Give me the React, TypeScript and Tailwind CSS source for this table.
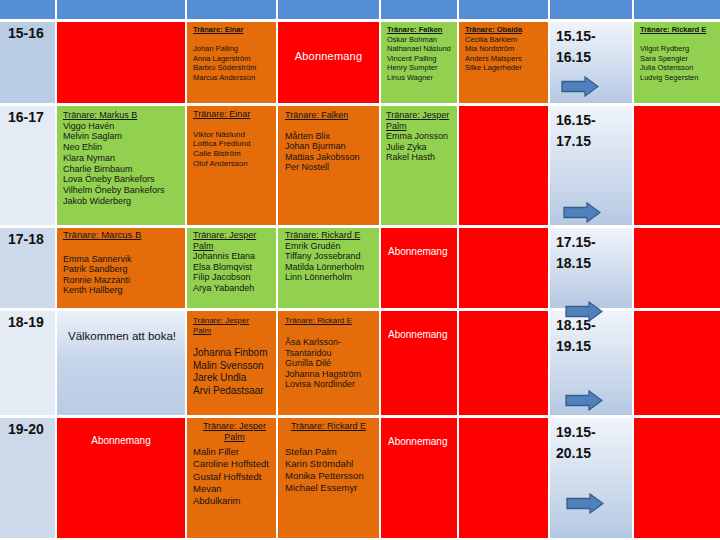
import type { ReactNode } from 'react';

const RED = 'bg-[#ff0000]';
const ORANGE = 'bg-[#e46c0a]';
const GREEN = 'bg-[#92d050]';
const HEAD = 'bg-[#558ed5]';

function Arrow({ className }: { className: string }) {
  return (
    <svg
      className={`absolute z-10 ${className}`}
      width="38"
      height="21"
      viewBox="0 0 38 21"
    >
      <polygon
        points="1,5.5 24,5.5 24,1 37,10.5 24,20 24,15.5 1,15.5"
        fill="#4f81bd"
        stroke="#385d8a"
        strokeWidth="1.3"
      />
    </svg>
  );
}

function Coach({ children, className = '' }: { children: ReactNode; className?: string }) {
  return <div className={`underline ${className}`}>{children}</div>;
}

function Names({ names }: { names: string[] }) {
  return (
    <>
      {names.map((n) => (
        <div key={n} className="whitespace-nowrap">
          {n}
        </div>
      ))}
    </>
  );
}

function TimeLabel({ label, bg }: { label: string; bg: string }) {
  return (
    <div className={`${bg} pl-[8px] pt-[2px] text-[14px] font-bold leading-[18px] text-[#111]`}>
      {label}
    </div>
  );
}

function Slot({ from, to, arrow }: { from: string; to: string; arrow: string }) {
  return (
    <div className="relative bg-linear-to-b from-[#f0f4fa] via-[#d3dfee] to-[#b5c8e3] pl-[6px] pt-[4px] text-[14px] font-bold leading-[21px] text-[#111]">
      <div>{from}-</div>
      <div>{to}</div>
      <Arrow className={arrow} />
    </div>
  );
}

function Abo({ className }: { className: string }) {
  return <div className={`${RED} text-white ${className}`}>Abonnemang</div>;
}

export default function App() {
  return (
    <div className="h-[540px] w-[720px] overflow-hidden bg-white font-['Liberation_Sans',Arial,sans-serif] text-[#141414]">
      <div className="grid grid-cols-[55px_128px_89px_101px_76px_89px_82px_86px] grid-rows-[19px_81px_119px_80px_104px_120px] gap-x-[2px] gap-y-[3px]">
        {/* header */}
        {Array.from({ length: 8 }, (_, i) => (
          <div key={i} className={HEAD} />
        ))}

        {/* 15-16 */}
        <TimeLabel label="15-16" bg="bg-[#b8cce4]" />
        <div className={RED} />
        <div className={`${ORANGE} pl-[6px] pt-[3px] text-[7.5px] leading-[9.5px]`}>
          <Coach className="font-bold">Tränare: Einar</Coach>
          <div className="h-[9.5px]" />
          <Names names={['Johan Palling', 'Anna Lagerström', 'Barbro Söderström', 'Marcus Andersson']} />
        </div>
        <Abo className="pt-[27px] text-center text-[11px] leading-[14px] tracking-[0.2px]" />
        <div className={`${GREEN} pl-[6px] pt-[3px] text-[7.5px] leading-[9.5px]`}>
          <Coach className="font-bold">Tränare: Falken</Coach>
          <Names names={['Oskar Bohman', 'Nathanael Näslund', 'Vincent Palling', 'Henry Sumpter', 'Linus Wagner']} />
        </div>
        <div className={`${ORANGE} pl-[6px] pt-[3px] text-[7.5px] leading-[9.5px]`}>
          <Coach className="font-bold">Tränare: Obaida</Coach>
          <Names names={['Cecilia Barklem', 'Mia Nordström', 'Anders Matspers', 'Silke Lagerheder']} />
        </div>
        <Slot from="15.15" to="16.15" arrow="left-[11px] top-[54px]" />
        <div className={`${GREEN} pl-[6px] pt-[3px] text-[7.5px] leading-[9.5px]`}>
          <Coach className="font-bold">Tränare: Rickard E</Coach>
          <div className="h-[9.5px]" />
          <Names names={['Vilgot Rydberg', 'Sara Spengler', 'Julia Ostensson', 'Ludvig Segersten']} />
        </div>

        {/* 16-17 */}
        <TimeLabel label="16-17" bg="bg-[#e4ebf5]" />
        <div className={`${GREEN} pl-[6px] pt-[4px] text-[9px] leading-[10.7px]`}>
          <Coach>Tränare: Markus B</Coach>
          <Names
            names={[
              'Viggo Havén',
              'Melvin Saglam',
              'Neo Ehlin',
              'Klara Nyman',
              'Charlie Birnbaum',
              'Lova Öneby Bankefors',
              'Vilhelm Öneby Bankefors',
              'Jakob Widerberg',
            ]}
          />
        </div>
        <div className={`${ORANGE} pl-[6px] pt-[4px] text-[8px] leading-[9.7px]`}>
          <Coach className="text-[9px]">Tränare: Einar</Coach>
          <div className="h-[10px]" />
          <Names names={['Viktor Näslund', 'Lottica Fredlund', 'Calle Biström', 'Olof Andersson']} />
        </div>
        <div className={`${ORANGE} pl-[7px] pt-[4px] text-[9px] leading-[10.6px]`}>
          <Coach>Tränare: Falken</Coach>
          <div className="h-[10px]" />
          <Names names={['Mårten Blix', 'Johan Bjurman', 'Mattias Jakobsson', 'Per Nostell']} />
        </div>
        <div className={`${GREEN} pl-[5px] pt-[4px] text-[9px] leading-[10.6px]`}>
          <Coach>Tränare: Jesper</Coach>
          <Coach>Palm</Coach>
          <Names names={['Emma Jonsson', 'Julie Zyka', 'Rakel Hasth']} />
        </div>
        <div className={RED} />
        <Slot from="16.15" to="17.15" arrow="left-[13px] top-[96px]" />
        <div className={RED} />

        {/* 17-18 */}
        <TimeLabel label="17-18" bg="bg-[#ccd9ea]" />
        <div className={`${ORANGE} pl-[6px] pt-[2px] text-[9px] leading-[10.5px]`}>
          <Coach className="text-[9.5px]">Tränare: Marcus B</Coach>
          <div className="h-[13px]" />
          <Names names={['Emma Sannervik', 'Patrik Sandberg', 'Ronnie Mazzanti', 'Kenth Hallberg']} />
        </div>
        <div className={`${GREEN} pl-[6px] pt-[2px] text-[9px] leading-[10.5px]`}>
          <Coach>Tränare: Jesper</Coach>
          <Coach>Palm</Coach>
          <Names names={['Johannis Etana', 'Elsa Blomqvist', 'Filip Jacobson', 'Arya Yabandeh']} />
        </div>
        <div className={`${GREEN} pl-[7px] pt-[2px] text-[9px] leading-[10.5px]`}>
          <Coach>Tränare: Rickard E</Coach>
          <Names names={['Emrik Grudén', 'Tiffany Jossebrand', 'Matilda Lönnerholm', 'Linn Lönnerholm']} />
        </div>
        <Abo className="pl-[7px] pt-[17px] text-[10px] leading-[14px]" />
        <div className={RED} />
        <Slot from="17.15" to="18.15" arrow="left-[15px] top-[73px]" />
        <div className={RED} />

        {/* 18-19 */}
        <TimeLabel label="18-19" bg="bg-[#e6ecf5]" />
        <div className="bg-linear-to-b from-[#ecf1f8] via-[#c5d4e9] to-[#b9cce5] pl-[11px] pt-[17px] text-[11.5px] leading-[16px] text-[#111]">
          Välkommen att boka!
        </div>
        <div className={`${ORANGE} pl-[6px] pt-[5px] text-[10px] leading-[12.5px]`}>
          <div className="text-[8px] leading-[10px]">
            <Coach>Tränare: Jesper</Coach>
            <Coach>Palm</Coach>
          </div>
          <div className="h-[11px]" />
          <Names names={['Johanna Finbom', 'Malin Svensson', 'Jarek Undla', 'Arvi Pedastsaar']} />
        </div>
        <div className={`${ORANGE} pl-[7px] pt-[5px] text-[9px] leading-[10.4px]`}>
          <Coach className="text-[8px]">Tränare: Rickard E</Coach>
          <div className="h-[11px]" />
          <Names names={['Åsa Karlsson-', 'Tsantaridou', 'Gunilla Dilé', 'Johanna Hagström', 'Lovisa Nordlinder']} />
        </div>
        <Abo className="pl-[7px] pt-[17px] text-[10px] leading-[14px]" />
        <div className={RED} />
        <Slot from="18.15" to="19.15" arrow="left-[15px] top-[79px]" />
        <div className={RED} />

        {/* 19-20 */}
        <TimeLabel label="19-20" bg="bg-[#ccd9ea]" />
        <Abo className="pt-[16px] text-center text-[10px] leading-[14px]" />
        <div className={`${ORANGE} pl-[6px] pt-[3px] text-[9.5px] leading-[12.3px]`}>
          <div className="text-center text-[9px] leading-[11px]">
            <Coach>Tränare: Jesper</Coach>
            <Coach>Palm</Coach>
          </div>
          <div className="h-[3px]" />
          <Names names={['Malin Filler', 'Caroline Hoffstedt', 'Gustaf Hoffstedt', 'Mevan', 'Abdulkarim']} />
        </div>
        <div className={`${ORANGE} pl-[7px] pt-[3px] text-[9.5px] leading-[12px]`}>
          <Coach className="pr-[7px] text-center text-[9px] leading-[11px]">Tränare: Rickard E</Coach>
          <div className="h-[14px]" />
          <Names names={['Stefan Palm', 'Karin Strömdahl', 'Monika Pettersson', 'Michael Essemyr']} />
        </div>
        <Abo className="pl-[7px] pt-[17px] text-[10px] leading-[14px]" />
        <div className={RED} />
        <Slot from="19.15" to="20.15" arrow="left-[16px] top-[75px]" />
        <div className={RED} />
      </div>
    </div>
  );
}
